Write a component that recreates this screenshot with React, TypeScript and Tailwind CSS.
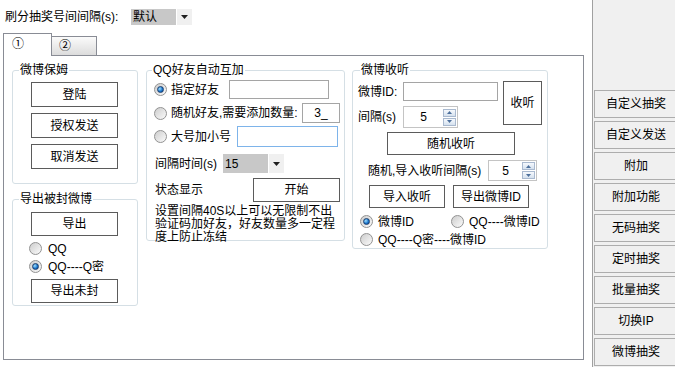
import React from 'react';

const Btn = ({ label, cls }: { label: string; cls: string }) => (
  <div className={`flex items-center justify-center border border-[#5b5b5b] bg-white ${cls}`}>{label}</div>
);

const Radio = ({ checked }: { checked?: boolean }) => (
  <span className="w-[13px] h-[13px] shrink-0 rounded-full border border-[#929292] bg-linear-to-br from-[#cdcdcd] to-[#fbfbfb] flex items-center justify-center">
    {checked && (
      <span className="w-[7px] h-[7px] rounded-full border border-[#1d3f6e] bg-[radial-gradient(circle_at_35%_35%,#9fe0ff,#1570c8_60%,#0b3f86)]" />
    )}
  </span>
);

const Arrow = () => (
  <svg width="7" height="4" viewBox="0 0 7 4">
    <path d="M0 0h7L3.5 4z" fill="#202020" />
  </svg>
);

const Combo = ({ value, h }: { value: string; h: string }) => (
  <div className={`flex items-stretch ${h}`}>
    <div className="w-[45px] bg-[#c8c8c8] flex items-center pl-[2px]">{value}</div>
    <div className="w-[15px] ml-[1px] bg-[#f0f0f0] flex items-center justify-center">
      <Arrow />
    </div>
  </div>
);

const SpinBtn = ({ up }: { up?: boolean }) => (
  <div className="w-[13px] h-[8px] border border-[#a9b9cf] bg-linear-to-b from-[#f6f9fd] to-[#d5e1ee] flex items-center justify-center">
    <svg width="5" height="3" viewBox="0 0 5 3">
      <path d={up ? 'M0 3h5L2.5 0z' : 'M0 0h5L2.5 3z'} fill="#4d6f9c" />
    </svg>
  </div>
);

const Spinner = ({ w, h }: { w: string; h: string }) => (
  <div className={`flex items-center border border-[#c4c4c4] bg-white ${w} ${h}`}>
    <span className="flex-1 text-center">5</span>
    <div className="flex flex-col gap-[1px] mr-[1px]">
      <SpinBtn up />
      <SpinBtn />
    </div>
  </div>
);

const Legend = ({ text, ml }: { text: string; ml: string }) => (
  <legend className={`${ml} px-[1px] leading-[12px]`}>{text}</legend>
);

const sideButtons = ['自定义抽奖', '自定义发送', '附加', '附加功能', '无码抽奖', '定时抽奖', '批量抽奖', '切换IP', '微博抽奖'];

export default function App() {
  return (
    <div className="w-[675px] h-[367px] bg-white flex overflow-hidden text-[12px] leading-[12px] text-black font-['Liberation_Sans','Noto_Sans_CJK_SC',sans-serif]">
      <div className="w-[592px] shrink-0 flex flex-col">
        {/* top setting */}
        <div className="h-[33px] flex items-start pt-[9px] pl-[5px]">
          <span className="w-[126px] h-[16px] flex items-center">刷分抽奖号间间隔(s):</span>
          <Combo value="默认" h="h-[16px]" />
        </div>

        {/* tabs */}
        <div className="h-[22px] flex items-end pl-[3px] relative z-10">
          <div className="w-[49px] h-[23px] -mb-px border border-b-0 border-[#898c95] bg-white pl-[8px] pt-[4px]">①</div>
          <div className="w-[45px] h-[19px] border border-l-0 border-b-0 border-[#898c95] bg-linear-to-b from-[#fbfbfb] to-[#dcdcdc] pl-[7px] pt-[3px]">②</div>
        </div>

        {/* panel */}
        <div className="ml-[3px] w-[581px] h-[305px] border border-[#898c95] flex items-start pl-[8px] pt-[8px]">
          {/* column 1 */}
          <div className="w-[126px] flex flex-col">
            <fieldset className="h-[120px] border border-[#d5dfe5] rounded-[3px] flex flex-col">
              <Legend text="微博保姆" ml="ml-[6px]" />
              <Btn label="登陆" cls="ml-[18px] mt-[6px] w-[87px] h-[25px]" />
              <Btn label="授权发送" cls="ml-[18px] mt-[6px] w-[87px] h-[25px]" />
              <Btn label="取消发送" cls="ml-[18px] mt-[6px] w-[87px] h-[25px]" />
            </fieldset>
            <fieldset className="mt-[9px] h-[113px] border border-[#d5dfe5] rounded-[3px] flex flex-col">
              <Legend text="导出被封微博" ml="ml-[6px]" />
              <Btn label="导出" cls="ml-[18px] mt-[7px] w-[87px] h-[24px]" />
              <div className="ml-[16px] mt-[6px] h-[13px] flex items-center gap-[6px]">
                <Radio />
                <span>QQ</span>
              </div>
              <div className="ml-[16px] mt-[5px] h-[13px] flex items-center gap-[6px]">
                <Radio checked />
                <span>QQ----Q密</span>
              </div>
              <Btn label="导出未封" cls="ml-[18px] mt-[6px] w-[87px] h-[24px]" />
            </fieldset>
          </div>

          {/* column 2 */}
          <fieldset className="ml-[8px] w-[199px] h-[177px] border border-[#d5dfe5] rounded-[3px] flex flex-col">
            <Legend text="QQ好友自动互加" ml="ml-[5px]" />
            <div className="mt-[4px] h-[19px] flex items-center pl-[7px]">
              <Radio checked />
              <span className="ml-[4px]">指定好友</span>
              <div className="ml-auto mr-[15px] w-[100px] h-[19px] border border-[#a5a5a5] bg-white" />
            </div>
            <div className="mt-[4px] h-[20px] flex items-center pl-[7px]">
              <Radio />
              <span className="ml-[4px] whitespace-nowrap">随机好友,需要添加数量:</span>
              <div className="ml-auto mr-[4px] w-[38px] h-[20px] border border-[#a5a5a5] bg-white flex items-center justify-center">3_</div>
            </div>
            <div className="mt-[3px] h-[21px] flex items-center pl-[7px]">
              <Radio />
              <span className="ml-[4px]">大号加小号</span>
              <div className="ml-auto mr-[6px] w-[101px] h-[21px] border border-[#7eb4ea] bg-white" />
            </div>
            <div className="mt-[7px] h-[19px] flex items-center pl-[8px]">
              <span className="w-[68px]">间隔时间(s)</span>
              <Combo value="15" h="h-[19px]" />
            </div>
            <div className="mt-[5px] h-[24px] flex items-center pl-[8px]">
              <span>状态显示</span>
              <Btn label="开始" cls="ml-auto mr-[4px] w-[87px] h-[24px]" />
            </div>
            <p className="mt-[3px] pl-[8px] leading-[13px] whitespace-nowrap">
              设置间隔40S以上可以无限制不出
              <br />
              验证码加好友，好友数量多一定程
              <br />
              度上防止冻结
            </p>
          </fieldset>

          {/* column 3 */}
          <fieldset className="ml-[7px] w-[196px] h-[185px] border border-[#d5dfe5] rounded-[3px] flex flex-col">
            <Legend text="微博收听" ml="ml-[7px]" />
            <div className="mt-[5px] flex items-start pl-[5px]">
              <div className="flex flex-col">
                <div className="mt-[1px] h-[19px] flex items-center">
                  <span className="w-[45px]">微博ID:</span>
                  <div className="w-[95px] h-[19px] border border-[#a5a5a5] bg-white" />
                </div>
                <div className="mt-[5px] h-[22px] flex items-center">
                  <span className="w-[45px]">间隔(s)</span>
                  <Spinner w="w-[55px]" h="h-[22px]" />
                </div>
              </div>
              <Btn label="收听" cls="ml-[5px] w-[39px] h-[44px]" />
            </div>
            <Btn label="随机收听" cls="ml-[34px] mt-[4px] w-[128px] h-[23px]" />
            <div className="mt-[5px] h-[21px] flex items-center pl-[15px]">
              <span className="w-[120px] whitespace-nowrap">随机,导入收听间隔(s)</span>
              <Spinner w="w-[49px]" h="h-[21px]" />
            </div>
            <div className="mt-[4px] flex pl-[16px]">
              <Btn label="导入收听" cls="w-[76px] h-[23px]" />
              <Btn label="导出微博ID" cls="ml-[8px] w-[76px] h-[23px]" />
            </div>
            <div className="mt-[7px] h-[13px] flex items-center pl-[7px]">
              <div className="w-[91px] flex items-center gap-[5px]">
                <Radio checked />
                <span>微博ID</span>
              </div>
              <div className="flex items-center gap-[5px]">
                <Radio />
                <span>QQ----微博ID</span>
              </div>
            </div>
            <div className="mt-[5px] h-[13px] flex items-center gap-[5px] pl-[7px]">
              <Radio />
              <span>QQ----Q密----微博ID</span>
            </div>
          </fieldset>
        </div>
      </div>

      {/* right button column */}
      <div className="flex-1 border-l border-[#a0a0a0] bg-[#f0f0f0] pt-[90px] pl-[1px] flex flex-col gap-[3px] overflow-hidden">
        {sideButtons.map((b) => (
          <div key={b} className="w-[90px] h-[28px] shrink-0 border border-[#adadad] bg-[#f0f0f0] flex items-center pl-[6px]">
            <span className="w-[70px] text-center">{b}</span>
          </div>
        ))}
      </div>
    </div>
  );
}
